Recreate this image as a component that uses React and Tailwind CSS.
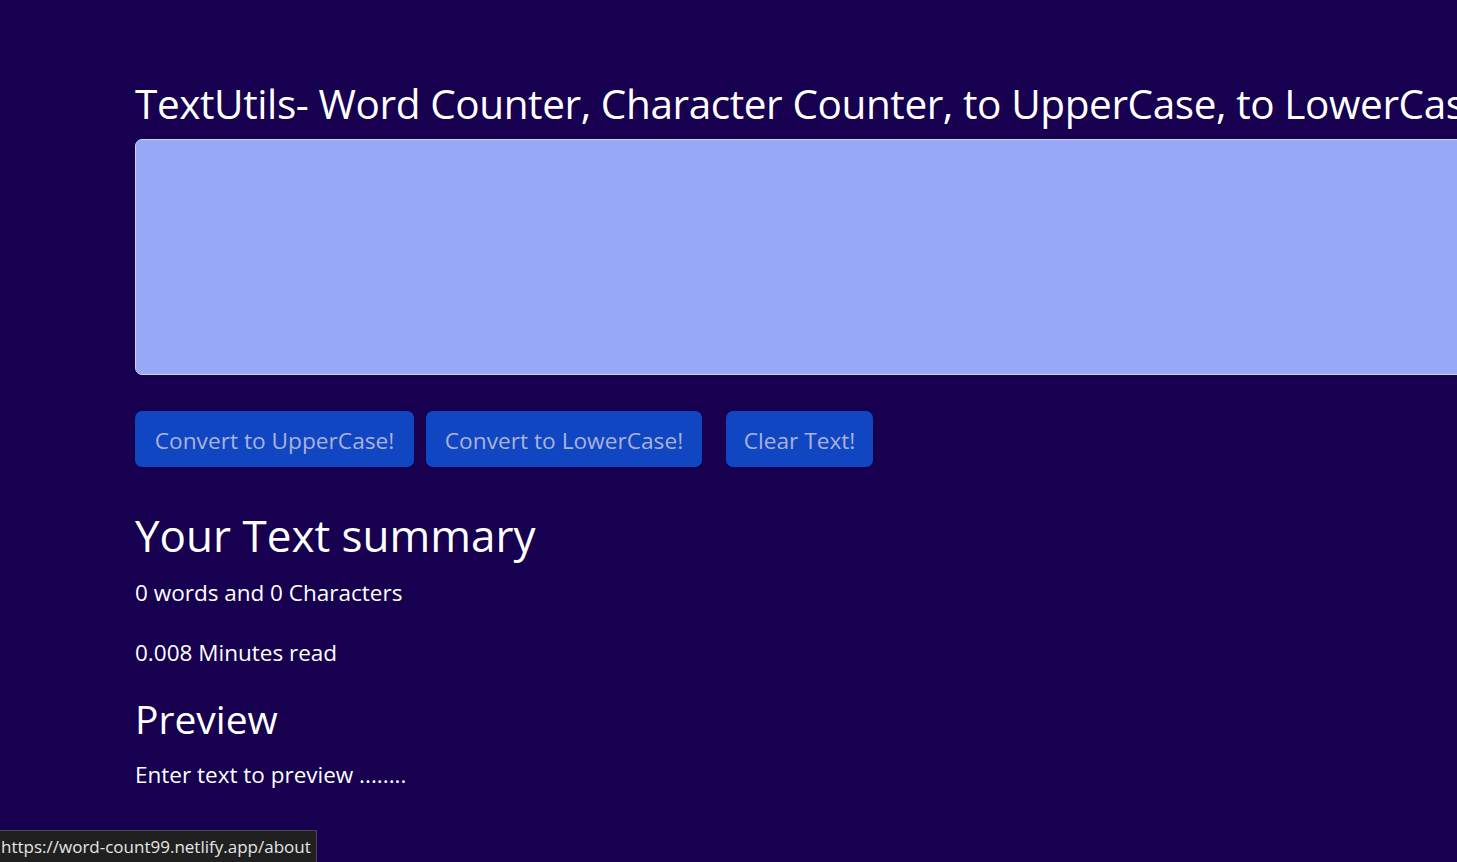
import React from "react";

const Btn = ({ label, className = "" }) => (
  <button
    className={`h-[56px] rounded-[7px] bg-[#1046c2] pt-[5px] text-[22.7px] text-[#aab2d9] ${className}`}
  >
    {label}
  </button>
);

export default function App() {
  return (
    <div
      className="relative h-[862px] w-[1457px] overflow-hidden bg-[#16004f] text-white"
      style={{ fontFamily: '"Open Sans", "Noto Sans", sans-serif' }}
    >
      <div className="flex flex-col pl-[135px] pt-[79px]">
        <h1 className="whitespace-nowrap text-[40.5px] leading-[50px] tracking-[-0.4px]">
          TextUtils- Word Counter, Character Counter, to UpperCase, to LowerCase, Remove extra spaces
        </h1>
        <textarea className="mt-[10px] h-[236px] w-[1400px] resize-none rounded-[7px] border border-[#cfd4e6] bg-[#97a8f7] outline-none" />
        <div className="mt-[36px] flex">
          <Btn label="Convert to UpperCase!" className="w-[279px]" />
          <Btn label="Convert to LowerCase!" className="ml-[12px] w-[276px]" />
          <Btn label="Clear Text!" className="ml-[24px] w-[147px]" />
        </div>
        <h2 className="mt-[38px] text-[44px] leading-[60px]">Your Text summary</h2>
        <p className="mt-[12px] text-[22.5px] leading-[32px]">0 words and 0 Characters</p>
        <p className="mt-[28px] text-[22.5px] leading-[32px]">0.008 Minutes read</p>
        <h2 className="mt-[24px] text-[39px] leading-[52px]">Preview</h2>
        <p className="mt-[14px] text-[22.5px] leading-[32px]">Enter text to preview ........</p>
      </div>
      <div
        className="absolute bottom-0 left-0 flex h-[32px] items-center border-t border-r border-[#4a4a4a] bg-[#202020] pl-[1px] pr-[5px] text-[17px] text-[#e6e6e6]"
        style={{ fontFamily: '"Open Sans", sans-serif' }}
      >
        https://word-count99.netlify.app/about
      </div>
    </div>
  );
}
